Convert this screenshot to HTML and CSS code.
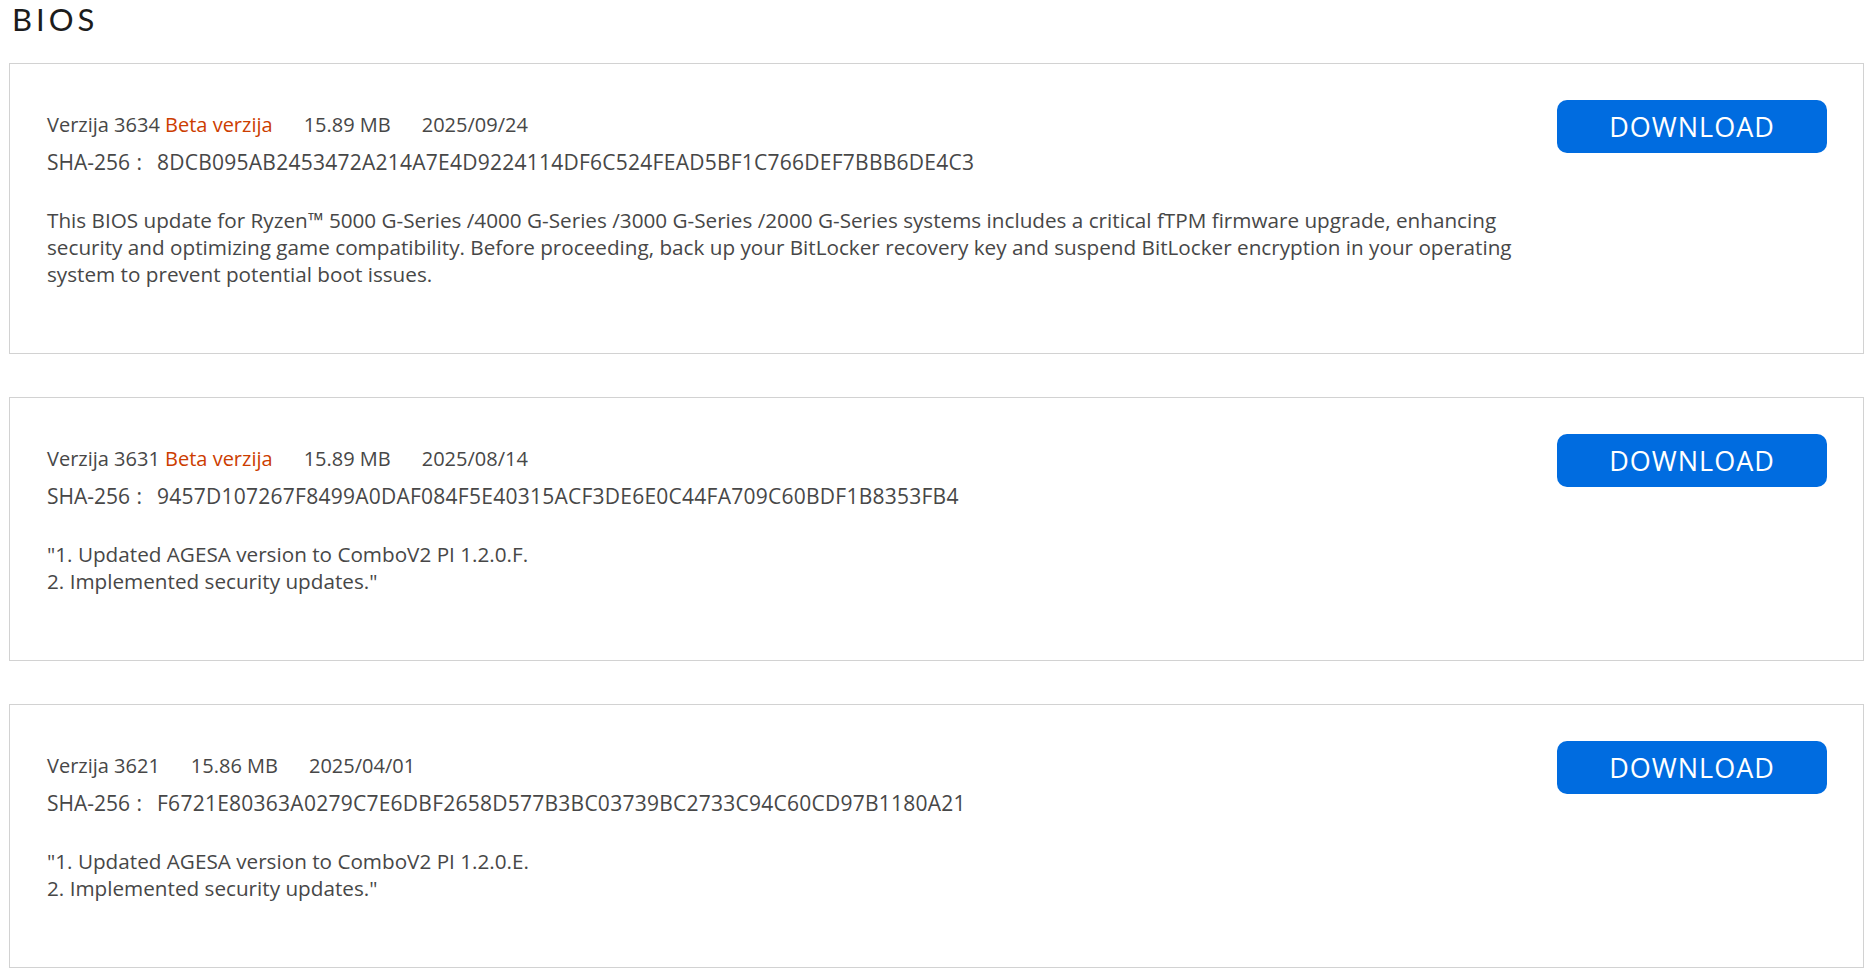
FILE: index.html
```html
<!DOCTYPE html>
<html lang="hr">
<head>
<meta charset="utf-8">
<title>BIOS</title>
<link rel="stylesheet" href="styles.css">
</head>
<body>
<main class="page">
  <h1 class="title">BIOS</h1>
  <section class="list">
    <article class="card">
      <div class="info">
        <div class="meta">
          <span class="ver">Verzija 3634 <span class="beta">Beta verzija</span></span>
          <span>15.89 MB</span>
          <span>2025/09/24</span>
        </div>
        <div class="sha"><span class="sha-label">SHA-256 :</span><span class="hash">8DCB095AB2453472A214A7E4D9224114DF6C524FEAD5BF1C766DEF7BBB6DE4C3</span></div>
        <p class="desc">This BIOS update for Ryzen™ 5000 G-Series /4000 G-Series /3000 G-Series /2000 G-Series systems includes a critical fTPM firmware upgrade, enhancing security and optimizing game compatibility. Before proceeding, back up your BitLocker recovery key and suspend BitLocker encryption in your operating system to prevent potential boot issues.</p>
      </div>
      <button class="dl">DOWNLOAD</button>
    </article>
    <article class="card">
      <div class="info">
        <div class="meta">
          <span class="ver">Verzija 3631 <span class="beta">Beta verzija</span></span>
          <span>15.89 MB</span>
          <span>2025/08/14</span>
        </div>
        <div class="sha"><span class="sha-label">SHA-256 :</span><span class="hash">9457D107267F8499A0DAF084F5E40315ACF3DE6E0C44FA709C60BDF1B8353FB4</span></div>
        <p class="desc">"1. Updated AGESA version to ComboV2 PI 1.2.0.F.<br>2. Implemented security updates."</p>
      </div>
      <button class="dl">DOWNLOAD</button>
    </article>
    <article class="card">
      <div class="info">
        <div class="meta">
          <span class="ver">Verzija 3621</span>
          <span>15.86 MB</span>
          <span>2025/04/01</span>
        </div>
        <div class="sha"><span class="sha-label">SHA-256 :</span><span class="hash">F6721E80363A0279C7E6DBF2658D577B3BC03739BC2733C94C60CD97B1180A21</span></div>
        <p class="desc">"1. Updated AGESA version to ComboV2 PI 1.2.0.E.<br>2. Implemented security updates."</p>
      </div>
      <button class="dl">DOWNLOAD</button>
    </article>
  </section>
</main>
</body>
</html>
```

FILE: styles.css
```css
* { box-sizing: border-box; }
html, body { margin: 0; padding: 0; background: #fff; }
body { font-family: "Open Sans", "Liberation Sans", sans-serif; color: #474747; }
.page { padding: 0 11px 0 9px; }
.title {
  margin: 0;
  height: 63px;
  padding-left: 3px;
  font-family: Lato, "Open Sans", sans-serif;
  font-size: 31px;
  font-weight: 400;
  letter-spacing: 4px;
  line-height: normal;
  color: #1c1c1c;
}
.list { display: flex; flex-direction: column; gap: 43px; }
.card {
  width: 1855px;
  border: 1px solid #d2d2d2;
  display: flex;
  align-items: flex-start;
  justify-content: space-between;
  padding: 36px 36px 65px 37px;
}
.info { margin-top: 11px; flex: 1; min-width: 0; max-width: 1505px; }
.meta { display: flex; gap: 31px; font-size: 20px; line-height: 27px; }
.beta { color: #cc3d00; }
.sha { display: flex; margin-top: 11px; font-size: 21px; line-height: 27px; }
.sha-label { word-spacing: 1px; }
.hash { margin-left: 15px; letter-spacing: 0.25px; }
.desc { margin: 31px 0 0; font-size: 20.7px; line-height: 27px; }
.dl {
  flex: none;
  width: 270px;
  height: 53px;
  border: 0;
  border-radius: 10px;
  background: #006ce0;
  color: #fff;
  font-family: "Open Sans", "Liberation Sans", sans-serif;
  font-size: 27px;
  font-weight: 400;
  letter-spacing: 1px;
  cursor: pointer;
}
```
